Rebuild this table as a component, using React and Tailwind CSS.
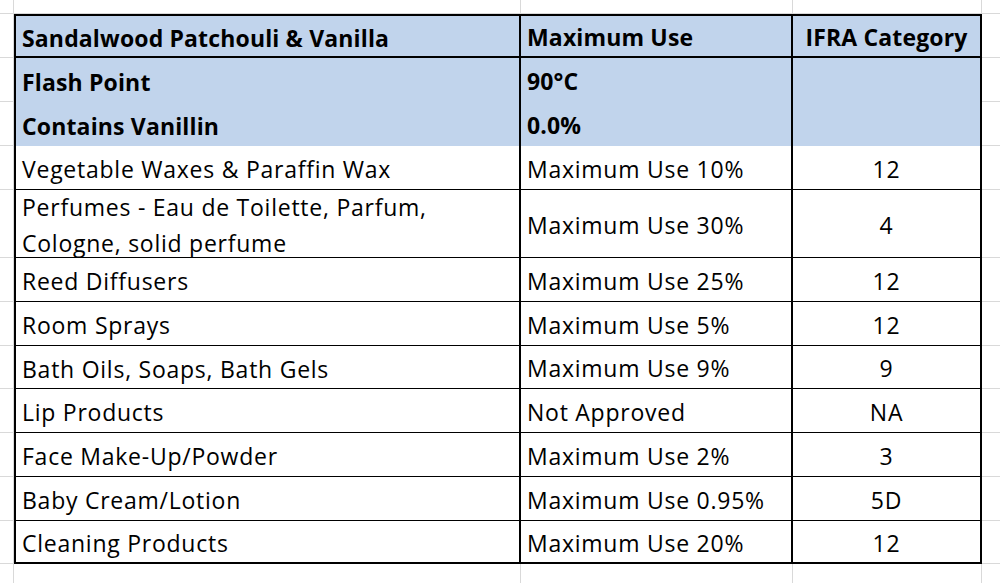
import React from 'react'

const rows = [
  { a: 'Sandalwood Patchouli & Vanilla', b: 'Maximum Use', c: 'IFRA Category', kind: 'head' },
  { a: 'Flash Point', b: '90°C', c: '', kind: 'blue' },
  { a: 'Contains Vanillin', b: '0.0%', c: '', kind: 'blue' },
  { a: 'Vegetable Waxes & Paraffin Wax', b: 'Maximum Use 10%', c: '12' },
  { a: ['Perfumes - Eau de Toilette, Parfum,', 'Cologne, solid perfume'], b: 'Maximum Use 30%', c: '4' },
  { a: 'Reed Diffusers', b: 'Maximum Use 25%', c: '12' },
  { a: 'Room Sprays', b: 'Maximum Use 5%', c: '12' },
  { a: 'Bath Oils, Soaps, Bath Gels', b: 'Maximum Use 9%', c: '9' },
  { a: 'Lip Products', b: 'Not Approved', c: 'NA' },
  { a: 'Face Make-Up/Powder', b: 'Maximum Use 2%', c: '3' },
  { a: 'Baby Cream/Lotion', b: 'Maximum Use 0.95%', c: '5D' },
  { a: 'Cleaning Products', b: 'Maximum Use 20%', c: '12', kind: 'last' },
]

const gut = 'border-[#d9d9d9]'

function rowBorder(kind) {
  if (kind === 'head') return 'border-t-2 border-b-2'
  if (kind === 'blue') return ''
  if (kind === 'last') return 'border-b-2'
  return 'border-b'
}

export default function App() {
  return (
    <div
      className="w-[1000px] h-[583px] bg-white text-black text-[23px] grid grid-cols-[14px_507px_272px_189px_18px] grid-rows-[14px_44px_44px_44px_44px_68px_44px_44px_43px_44px_44px_44px_43px_19px] overflow-hidden"
      style={{ fontFamily: '"Open Sans", "Noto Sans", sans-serif' }}
    >
      {/* top gutter row */}
      <div className={`border-r border-b ${gut}`} />
      <div className={`border-r border-b ${gut}`} />
      <div className={`border-r border-b ${gut}`} />
      <div className={`border-r border-b ${gut}`} />
      <div className={`border-b ${gut}`} />

      {rows.map((r, i) => {
        const strong = r.kind === 'head' || r.kind === 'blue'
        const bg = strong ? 'bg-[#c1d4ec]' : 'bg-white'
        const weight = strong ? 'font-bold tracking-[0.15px]' : 'font-normal tracking-[0.75px]'
        const rb = rowBorder(r.kind)
        return (
          <React.Fragment key={i}>
            <div className={`border-r border-b ${gut}`} />
            <div className={`${bg} ${weight} ${rb} border-l-2 border-r-2 border-black flex items-center pl-[6px] pt-[3px] leading-[36px] whitespace-nowrap`}>
              {Array.isArray(r.a) ? (
                <div className="flex flex-col">
                  {r.a.map((t) => (
                    <span key={t}>{t}</span>
                  ))}
                </div>
              ) : (
                r.a
              )}
            </div>
            <div className={`${bg} ${weight} ${rb} border-r-2 border-black flex items-center pl-[6px] pt-[3px] whitespace-nowrap`}>
              {r.b}
            </div>
            <div className={`${bg} ${weight} ${rb} border-r-2 border-black flex items-center justify-center pt-[3px] whitespace-nowrap`}>
              {r.c}
            </div>
            <div className={`border-b ${gut}`} />
          </React.Fragment>
        )
      })}

      {/* bottom gutter row */}
      <div className={`border-r ${gut}`} />
      <div className={`border-r ${gut}`} />
      <div className={`border-r ${gut}`} />
      <div className={`border-r ${gut}`} />
      <div />
    </div>
  )
}
